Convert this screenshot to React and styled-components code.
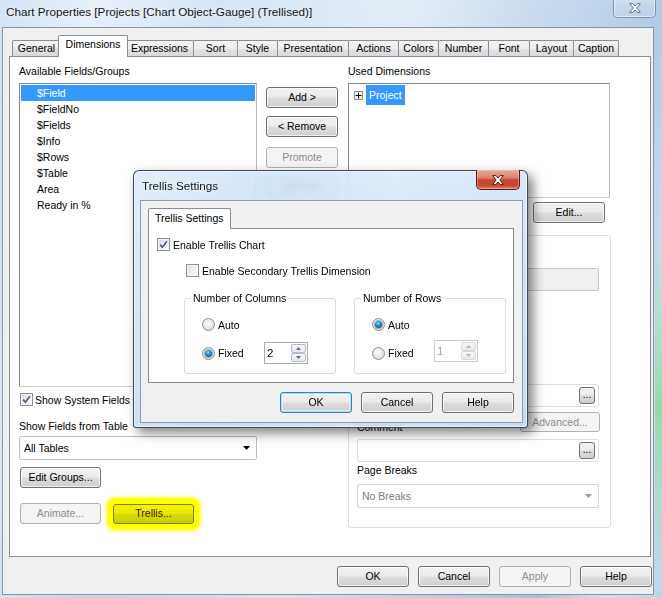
import React from "react";
import styled, { createGlobalStyle, css } from "styled-components";

const GlobalStyle = createGlobalStyle`
  html, body {
    margin: 0;
    padding: 0;
  }
  body {
    width: 662px;
    height: 598px;
    overflow: hidden;
    background: #c6daee;
    font-family: "Liberation Sans", Arial, sans-serif;
    font-size: 10.5px;
    color: #000;
  }
  * {
    box-sizing: border-box;
  }
`;

const Screen = styled.div`
  position: relative;
  width: 662px;
  height: 598px;
  display: flex;
  flex-direction: column;
  background:
    linear-gradient(180deg, rgba(0, 0, 0, 0) 40%, rgba(110, 215, 120, 0.6) 68%, rgba(0, 0, 0, 0) 96%) right top / 7px 100% no-repeat,
    linear-gradient(102deg, rgba(255, 255, 255, 0) 0%, rgba(255, 255, 255, 0.45) 12%, rgba(255, 255, 255, 0.05) 28%, rgba(255, 255, 255, 0.35) 52%, rgba(120, 155, 200, 0.35) 84%, rgba(255, 255, 255, 0.3) 93%, rgba(255, 255, 255, 0) 100%),
    linear-gradient(180deg, #d4e4f4 0%, #c5d9ee 40%, #bed4ea 100%);
`;

const TitleBar = styled.div`
  display: flex;
  align-items: flex-start;
  height: 27px;
  padding-left: 6px;
`;

const Caption = styled.span`
  margin-top: ${({ $mt = 5 }) => $mt}px;
  margin-left: ${({ $ml = 0 }) => $ml}px;
  font-size: 11.7px;
  line-height: 14px;
  color: #151515;
  white-space: nowrap;
  text-shadow: 0 0 7px rgba(255, 255, 255, 0.95);
`;

const CloseButton = styled.div`
  flex: none;
  margin-left: auto;
  margin-right: ${({ $mr }) => $mr}px;
  margin-top: -1px;
  width: ${({ $w }) => $w}px;
  height: ${({ $h }) => $h}px;
  display: flex;
  align-items: center;
  justify-content: center;
  border-radius: 0 0 5px 5px;
  ${({ $active }) =>
    $active
      ? css`
          border: 1px solid #5a1a0e;
          border-top: none;
          background: linear-gradient(180deg, #e9a99a 0%, #d98270 42%, #c6472d 52%, #c44a31 82%, #e08572 100%);
          box-shadow: inset 0 0 0 1px rgba(255, 200, 190, 0.45);
        `
      : css`
          border: 1px solid rgba(70, 90, 120, 0.55);
          border-top: none;
          background: linear-gradient(180deg, rgba(255, 255, 255, 0.35) 0%, rgba(255, 255, 255, 0.15) 50%, rgba(200, 220, 240, 0.3) 100%);
          box-shadow: inset 0 0 0 1px rgba(255, 255, 255, 0.5);
        `}
`;

const Client = styled.div`
  margin-left: 2px;
  width: 652px;
  height: 568px;
  border: 1px solid #8895a6;
  background: #f0f0f0;
  display: flex;
  flex-direction: column;
`;

const TabStrip = styled.div`
  position: relative;
  z-index: 1;
  display: flex;
  align-items: flex-end;
  height: 21px;
  margin: 7px 0 0 9px;
`;

const Tab = styled.div`
  flex: none;
  width: ${({ $w }) => $w}px;
  height: 16px;
  margin-right: -1px;
  border: 1px solid #898c95;
  border-bottom: none;
  border-radius: 2px 2px 0 0;
  background: linear-gradient(180deg, #f5f5f5 0%, #ededed 50%, #e3e3e3 52%, #d9d9d9 100%);
  text-align: center;
  line-height: 15px;
  white-space: nowrap;
  ${({ $selected, $w }) =>
    $selected &&
    css`
      position: relative;
      z-index: 2;
      width: ${$w + 4}px;
      height: 22px;
      margin-left: -2px;
      margin-right: -3px;
      margin-bottom: -1px;
      background: #fff;
      line-height: 17px;
    `}
`;

const TabPanel = styled.div`
  margin-left: 6px;
  width: 642px;
  height: 501px;
  border: 1px solid #898c95;
  background: #fff;
  display: flex;
  align-items: flex-start;
  padding: 7px 0 0 9px;
`;

const Column = styled.div`
  flex: none;
  width: ${({ $w }) => $w}px;
  margin-left: ${({ $ml = 0 }) => $ml}px;
  padding-top: ${({ $pt = 0 }) => $pt}px;
  display: flex;
  flex-direction: column;
  align-items: flex-start;
`;

const FieldLabel = styled.div`
  line-height: 14px;
  margin-top: ${({ $mt = 0 }) => $mt}px;
  margin-bottom: ${({ $mb = 0 }) => $mb}px;
  white-space: nowrap;
`;

const ListBox = styled.div`
  width: ${({ $w = 238 }) => $w}px;
  height: ${({ $h }) => $h}px;
  margin-top: 5px;
  padding: 1px;
  border: 1px solid;
  border-color: #828790 #b9bcc2 #c9ccd1 #828790;
  background: #fff;
  overflow: hidden;
`;

const ListItem = styled.div`
  height: 16px;
  line-height: 16px;
  padding-left: 16px;
  white-space: nowrap;
  ${({ $selected }) =>
    $selected &&
    css`
      background: #3399ff;
      color: #fff;
    `}
`;

const TreeItem = styled.div`
  display: flex;
  align-items: center;
  height: 20px;
  padding-left: 4px;
  gap: 3px;
`;

const ExpandBox = styled.span`
  flex: none;
  width: 9px;
  height: 9px;
  border: 1px solid #919191;
  background: linear-gradient(135deg, #ffffff, #e4e4e4);
  display: flex;
  align-items: center;
  justify-content: center;
`;

const TreeLabel = styled.span`
  height: 20px;
  line-height: 20px;
  padding: 0 3px;
  background: #3399ff;
  color: #fff;
`;

const CheckRow = styled.div`
  display: flex;
  align-items: center;
  gap: ${({ $gap = 3 }) => $gap}px;
  height: 13px;
  margin-top: ${({ $mt = 0 }) => $mt}px;
  margin-left: ${({ $ml = 0 }) => $ml}px;
  white-space: nowrap;
`;

const CheckBox = styled.span`
  flex: none;
  width: 13px;
  height: 13px;
  border: 1px solid #8e8f8f;
  background: linear-gradient(135deg, #d6d8dc 0%, #f2f2f2 60%, #fbfbfb 100%);
  box-shadow: inset 0 0 0 1px #f6f6f6;
  display: flex;
  align-items: center;
  justify-content: center;
`;

const Radio = styled.span`
  flex: none;
  width: 13px;
  height: 13px;
  border-radius: 50%;
  border: 1px solid #8e8f8f;
  background: radial-gradient(circle at 45% 40%, #fdfdfd 0%, #e6e6e6 55%, #cfcfcf 100%);
  display: flex;
  align-items: center;
  justify-content: center;
  ${({ $on }) =>
    $on &&
    css`
      &::after {
        content: "";
        width: 7px;
        height: 7px;
        border-radius: 50%;
        background: radial-gradient(circle at 45% 35%, #9ad8f5 0%, #2a8ccb 40%, #0f4f7e 80%);
        box-shadow: 0 0 0 1px rgba(20, 60, 100, 0.35);
      }
    `}
`;

const Combo = styled.div`
  display: flex;
  align-items: center;
  justify-content: space-between;
  width: 100%;
  height: 24px;
  margin-top: ${({ $mt = 0 }) => $mt}px;
  padding: 0 6px 0 4px;
  border: 1px solid ${({ $disabled }) => ($disabled ? "#d2d4d8" : "#bcbec3")};
  border-radius: 2px;
  background: #fff;
  color: ${({ $disabled }) => ($disabled ? "#7a7a7a" : "#000")};
  white-space: nowrap;
`;

const Button = styled.button`
  flex: none;
  width: ${({ $w = 72 }) => $w}px;
  height: ${({ $h = 21 }) => $h}px;
  margin-top: ${({ $mt = 0 }) => $mt}px;
  margin-bottom: ${({ $mb = 0 }) => $mb}px;
  padding: 0;
  font-family: inherit;
  font-size: 10.5px;
  line-height: 1;
  color: #000;
  border: 1px solid #707070;
  border-radius: 3px;
  background: linear-gradient(180deg, #f2f2f2 0%, #ebebeb 48%, #dddddd 52%, #cfcfcf 100%);
  box-shadow: inset 0 0 0 1px rgba(255, 255, 255, 0.7);
  white-space: nowrap;
  ${({ $variant }) =>
    $variant === "disabled" &&
    css`
      color: #8b8b8b;
      border-color: #adb2b5;
      background: #f4f4f4;
      box-shadow: none;
    `}
  ${({ $variant }) =>
    $variant === "default" &&
    css`
      border-color: #3c7fb1;
      box-shadow: inset 0 0 0 1px #a9def6, inset 0 0 0 2px rgba(255, 255, 255, 0.5);
    `}
  ${({ $variant }) =>
    $variant === "marked" &&
    css`
      color: #3a1010;
      border-color: #7d7d1c;
      background: linear-gradient(180deg, #f4f400 0%, #e8e800 48%, #dada00 52%, #cccc00 100%);
      box-shadow: 0 0 0 5px #ffff00, 0 0 3px 7px rgba(255, 255, 0, 0.85);
    `}
`;

const ButtonStack = styled.div`
  display: flex;
  flex-direction: column;
  gap: 8px;
`;

const ButtonRow = styled.div`
  display: flex;
  align-items: center;
  gap: ${({ $gap = 9 }) => $gap}px;
  margin-top: ${({ $mt = 0 }) => $mt}px;
  margin-left: ${({ $ml = 0 }) => $ml}px;
  margin-right: ${({ $mr = 0 }) => $mr}px;
  justify-content: flex-end;
  ${({ $end }) =>
    $end &&
    css`
      align-self: stretch;
    `}
  ${({ $right }) =>
    $right &&
    css`
      align-self: flex-end;
    `}
`;

const SettingsGroup = styled.div`
  width: 263px;
  height: 293px;
  margin-top: 12px;
  padding: 0 11px 0 8px;
  border: 1px solid #d5dfe5;
  border-radius: 3px;
  display: flex;
  flex-direction: column;
`;

const TextField = styled.div`
  display: flex;
  align-items: center;
  justify-content: flex-end;
  height: 23px;
  margin-top: ${({ $mt = 0 }) => $mt}px;
  padding-right: 3px;
  border: 1px solid ${({ $disabled }) => ($disabled ? "#c8cacd" : "#dcdfe4")};
  border-radius: 2px;
  background: ${({ $disabled }) => ($disabled ? "#f0f0f0" : "#fff")};
`;

const DotsButton = styled.button`
  width: 16px;
  height: 17px;
  padding: 0 0 3px;
  font-family: inherit;
  font-size: 10px;
  line-height: 1;
  color: #000;
  border: 1px solid #707070;
  border-radius: 3px;
  background: linear-gradient(180deg, #f2f2f2 0%, #ebebeb 48%, #dddddd 52%, #cfcfcf 100%);
  display: flex;
  align-items: flex-end;
  justify-content: center;
`;

const SplitRow = styled.div`
  display: flex;
  align-items: flex-end;
  justify-content: space-between;
  margin-top: 5px;
  margin-right: -1px;
`;

/* ---------- Trellis dialog ---------- */

const Dialog = styled.div`
  position: absolute;
  left: 133px;
  top: 170px;
  z-index: 10;
  width: 395px;
  height: 258px;
  padding: 0 4px 4px 6px;
  display: flex;
  flex-direction: column;
  border: 1px solid rgba(35, 45, 60, 0.85);
  border-radius: 6px 6px 3px 3px;
  background:
    linear-gradient(100deg, rgba(255, 255, 255, 0.25) 0%, rgba(255, 255, 255, 0) 30%, rgba(255, 255, 255, 0.2) 60%, rgba(255, 255, 255, 0) 100%),
    linear-gradient(180deg, rgba(203, 224, 245, 0.78) 0%, rgba(188, 212, 238, 0.82) 100%);
  backdrop-filter: blur(2.5px);
  box-shadow: 5px 5px 12px rgba(0, 0, 0, 0.5), inset 0 0 0 1px rgba(255, 255, 255, 0.55);
`;

const DialogTitleRow = styled.div`
  flex: none;
  display: flex;
  align-items: flex-start;
  height: 29px;
`;

const DialogClient = styled.div`
  flex: 1;
  display: flex;
  flex-direction: column;
  align-items: flex-start;
  border: 1px solid #8b9db1;
  background: #f0f0f0;
`;

const DialogTab = styled.div`
  position: relative;
  z-index: 1;
  width: 83px;
  height: 21px;
  margin: 7px 0 -1px 7px;
  padding-left: 6px;
  border: 1px solid #898c95;
  border-bottom: none;
  border-radius: 2px 2px 0 0;
  background: #fff;
  line-height: 19px;
  white-space: nowrap;
`;

const DialogPanel = styled.div`
  width: 366px;
  height: 155px;
  margin-left: 7px;
  border: 1px solid #898c95;
  background: #fff;
  display: flex;
  flex-direction: column;
  align-items: flex-start;
`;

const GroupRow = styled.div`
  display: flex;
  gap: 18px;
  margin: 14px 0 0 35px;
`;

const GroupBox = styled.fieldset`
  width: 152px;
  height: 83px;
  margin: 0;
  padding: 0;
  border: 1px solid #d5dfe5;
  border-radius: 3px;
`;

const GroupLegend = styled.legend`
  margin-left: 6px;
  padding: 0 2px;
  font-size: 10.5px;
  line-height: 14px;
`;

const GroupBody = styled.div`
  display: flex;
  flex-direction: column;
  padding: 0 27px 0 17px;
`;

const RadioRow = styled.div`
  display: flex;
  align-items: center;
  gap: 3px;
  height: ${({ $h = 13 }) => $h}px;
  margin-top: ${({ $mt }) => $mt}px;
  white-space: nowrap;
`;

const Spinner = styled.div`
  display: flex;
  flex: none;
  width: 44px;
  height: 22px;
  margin-left: auto;
  margin-top: ${({ $mt = 0 }) => $mt}px;
  border: 1px solid ${({ $disabled }) => ($disabled ? "#c9cbce" : "#abadb3")};
  background: #fff;
`;

const SpinValue = styled.span`
  flex: 1;
  padding-left: 2px;
  font-size: 11.5px;
  line-height: 20px;
  color: ${({ $disabled }) => ($disabled ? "#a3a3a3" : "#000")};
`;

const SpinButtons = styled.div`
  width: 16px;
  display: flex;
  flex-direction: column;
  padding: 1px 1px 1px 0;
`;

const SpinButton = styled.span`
  flex: 1;
  display: flex;
  align-items: center;
  justify-content: center;
  border: 1px solid ${({ $disabled }) => ($disabled ? "#d8d8d8" : "#b6bcc6")};
  border-radius: 2px;
  background: linear-gradient(180deg, #f7f7f7 0%, #e9e9e9 100%);
`;

/* ---------- glyphs ---------- */

function CloseGlyph({ fill, stroke }) {
  return (
    <svg width="12" height="10" viewBox="0 0 12 10">
      <polygon
        points="0.7,0.6 3.9,0.6 6,3.1 8.1,0.6 11.3,0.6 7.8,5 11.3,9.4 8.1,9.4 6,6.9 3.9,9.4 0.7,9.4 4.2,5"
        fill={fill}
        stroke={stroke}
        strokeWidth="1"
        strokeLinejoin="round"
      />
    </svg>
  );
}

function Check({ checked }) {
  return (
    <CheckBox>
      {checked && (
        <svg width="9" height="9" viewBox="0 0 9 9">
          <path d="M1.2 4.6 L3.4 7.2 L7.9 1.3" fill="none" stroke="#4a5d8e" strokeWidth="1.7" />
        </svg>
      )}
    </CheckBox>
  );
}

function Arrow({ color = "#000" }) {
  return (
    <svg width="7" height="4" viewBox="0 0 7 4">
      <path d="M0 0 H7 L3.5 4 Z" fill={color} />
    </svg>
  );
}

function SpinArrow({ up, disabled }) {
  return (
    <svg width="5" height="3" viewBox="0 0 5 3">
      <path d={up ? "M0 3 L2.5 0 L5 3 Z" : "M0 0 L2.5 3 L5 0 Z"} fill={disabled ? "#b8b8b8" : "#4d6aa8"} />
    </svg>
  );
}

function SpinBox({ value, disabled, mt }) {
  return (
    <Spinner $disabled={disabled} $mt={mt}>
      <SpinValue $disabled={disabled}>{value}</SpinValue>
      <SpinButtons>
        <SpinButton $disabled={disabled}>
          <SpinArrow up disabled={disabled} />
        </SpinButton>
        <SpinButton $disabled={disabled}>
          <SpinArrow disabled={disabled} />
        </SpinButton>
      </SpinButtons>
    </Spinner>
  );
}

function AutoFixedGroup({ title, fixed, value, disabledSpin }) {
  return (
    <GroupBox>
      <GroupLegend>{title}</GroupLegend>
      <GroupBody>
        <RadioRow $mt={13}>
          <Radio $on={!fixed} />
          <span>Auto</span>
        </RadioRow>
        <RadioRow $mt={11} $h={22}>
          <Radio $on={fixed} />
          <span>Fixed</span>
          <SpinBox value={value} disabled={disabledSpin} mt={disabledSpin ? -4 : 0} />
        </RadioRow>
      </GroupBody>
    </GroupBox>
  );
}

const tabs = [
  ["General", 49],
  ["Dimensions", 66],
  ["Expressions", 69],
  ["Sort", 45],
  ["Style", 41],
  ["Presentation", 72],
  ["Actions", 51],
  ["Colors", 41],
  ["Number", 51],
  ["Font", 42],
  ["Layout", 45],
  ["Caption", 46],
];

const fields = ["$Field", "$FieldNo", "$Fields", "$Info", "$Rows", "$Table", "Area", "Ready in %"];

export default function App() {
  return (
    <Screen>
      <GlobalStyle />
      <TitleBar>
        <Caption>Chart Properties [Projects [Chart Object-Gauge] (Trellised)]</Caption>
        <CloseButton $w={43} $h={19} $mr={6}>
          <CloseGlyph fill="#eef3f8" stroke="#6b7888" />
        </CloseButton>
      </TitleBar>

      <Client>
        <TabStrip>
          {tabs.map(([name, w]) => (
            <Tab key={name} $w={w} $selected={name === "Dimensions"}>
              {name}
            </Tab>
          ))}
        </TabStrip>

        <TabPanel>
          <Column $w={238}>
            <FieldLabel>Available Fields/Groups</FieldLabel>
            <ListBox $h={304}>
              {fields.map((f, i) => (
                <ListItem key={f} $selected={i === 0}>
                  {f}
                </ListItem>
              ))}
            </ListBox>
            <CheckRow $mt={6} $ml={1} $gap={2}>
              <Check checked />
              Show System Fields
            </CheckRow>
            <FieldLabel $mt={13}>Show Fields from Table</FieldLabel>
            <Combo $mt={3}>
              All Tables
              <Arrow />
            </Combo>
            <ButtonRow $mt={7} $ml={1}>
              <Button $w={81}>Edit Groups...</Button>
            </ButtonRow>
            <ButtonRow $mt={15} $ml={1} $gap={12}>
              <Button $w={81} $variant="disabled">
                Animate...
              </Button>
              <Button $w={81} $h={20} $variant="marked">
                Trellis...
              </Button>
            </ButtonRow>
          </Column>

          <Column $w={72} $ml={9} $pt={23}>
            <ButtonStack>
              <Button>Add &gt;</Button>
              <Button>&lt; Remove</Button>
              <Button $variant="disabled" $mt={2}>
                Promote
              </Button>
              <Button $variant="disabled">Demote</Button>
            </ButtonStack>
          </Column>

          <Column $w={263} $ml={10}>
            <FieldLabel>Used Dimensions</FieldLabel>
            <ListBox $w={262} $h={115}>
              <TreeItem>
                <ExpandBox>
                  <svg width="7" height="7" viewBox="0 0 7 7">
                    <path d="M0.5 3.5 H6.5 M3.5 0.5 V6.5" stroke="#000" strokeWidth="1" />
                  </svg>
                </ExpandBox>
                <TreeLabel>Project</TreeLabel>
              </TreeItem>
            </ListBox>
            <ButtonRow $mt={4} $mr={6} $right>
              <Button>Edit...</Button>
            </ButtonRow>
            <SettingsGroup>
              <TextField $disabled $mt={32} />
              <TextField $mt={93}>
                <DotsButton>...</DotsButton>
              </TextField>
              <SplitRow>
                <FieldLabel $mb={1}>Comment</FieldLabel>
                <Button $w={80} $h={20} $mb={3} $variant="disabled">
                  Advanced...
                </Button>
              </SplitRow>
              <TextField $mt={4}>
                <DotsButton>...</DotsButton>
              </TextField>
              <FieldLabel $mt={1}>Page Breaks</FieldLabel>
              <Combo $mt={7} $disabled>
                No Breaks
                <Arrow color="#9a9a9a" />
              </Combo>
            </SettingsGroup>
          </Column>
        </TabPanel>

        <ButtonRow $mt={9} $mr={1} $end>
          <Button>OK</Button>
          <Button>Cancel</Button>
          <Button $variant="disabled">Apply</Button>
          <Button>Help</Button>
        </ButtonRow>
      </Client>

      <Dialog>
        <DialogTitleRow>
          <Caption $mt={8} $ml={2}>
            Trellis Settings
          </Caption>
          <CloseButton $active $w={44} $h={20} $mr={3}>
            <CloseGlyph fill="#ffffff" stroke="#5b1a10" />
          </CloseButton>
        </DialogTitleRow>
        <DialogClient>
          <DialogTab>Trellis Settings</DialogTab>
          <DialogPanel>
            <CheckRow $mt={9} $ml={8}>
              <Check checked />
              Enable Trellis Chart
            </CheckRow>
            <CheckRow $mt={13} $ml={37}>
              <Check />
              Enable Secondary Trellis Dimension
            </CheckRow>
            <GroupRow>
              <AutoFixedGroup title="Number of Columns" fixed value="2" />
              <AutoFixedGroup title="Number of Rows" value="1" disabledSpin />
            </GroupRow>
          </DialogPanel>
          <ButtonRow $mt={9} $mr={8} $end>
            <Button $variant="default">OK</Button>
            <Button>Cancel</Button>
            <Button>Help</Button>
          </ButtonRow>
        </DialogClient>
      </Dialog>
    </Screen>
  );
}
